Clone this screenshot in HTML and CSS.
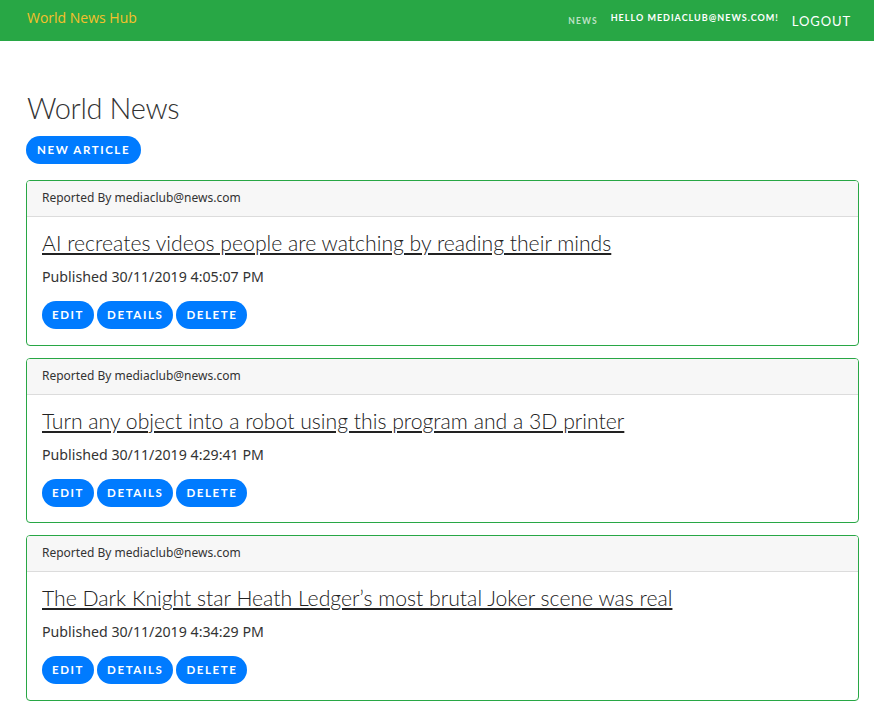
FILE: index.html
```html
<!DOCTYPE html>
<html lang="en">
<head>
<meta charset="utf-8">
<title>World News Hub</title>
<link rel="stylesheet" href="styles.css">
</head>
<body>
<nav class="navbar">
  <a class="brand" href="#">World News Hub</a>
  <div class="nav-right">
    <a class="nav-link" href="#">News</a>
    <span class="nav-hello">Hello mediaclub@news.com!</span>
    <a class="nav-logout" href="#">Logout</a>
  </div>
</nav>
<main class="container">
  <h1 class="page-title">World News</h1>
  <a class="btn btn-new" href="#">New Article</a>

  <div class="card">
    <div class="card-header">Reported By mediaclub@news.com</div>
    <div class="card-body">
      <a class="card-title" href="#">AI recreates videos people are watching by reading their minds</a>
      <p class="card-date">Published 30/11/2019 4:05:07 PM</p>
      <div class="actions">
        <a class="btn" href="#">Edit</a>
        <a class="btn" href="#">Details</a>
        <a class="btn" href="#">Delete</a>
      </div>
    </div>
  </div>

  <div class="card">
    <div class="card-header">Reported By mediaclub@news.com</div>
    <div class="card-body">
      <a class="card-title" href="#">Turn any object into a robot using this program and a 3D printer</a>
      <p class="card-date">Published 30/11/2019 4:29:41 PM</p>
      <div class="actions">
        <a class="btn" href="#">Edit</a>
        <a class="btn" href="#">Details</a>
        <a class="btn" href="#">Delete</a>
      </div>
    </div>
  </div>

  <div class="card">
    <div class="card-header">Reported By mediaclub@news.com</div>
    <div class="card-body">
      <a class="card-title" href="#">The Dark Knight star Heath Ledger’s most brutal Joker scene was real</a>
      <p class="card-date">Published 30/11/2019 4:34:29 PM</p>
      <div class="actions">
        <a class="btn" href="#">Edit</a>
        <a class="btn" href="#">Details</a>
        <a class="btn" href="#">Delete</a>
      </div>
    </div>
  </div>
</main>
</body>
</html>
```
FILE: styles.css
```css
* { box-sizing: border-box; }

body {
  margin: 0;
  font-family: "Noto Sans", "Open Sans", sans-serif;
  color: #333;
  background: #fff;
}

a { text-decoration: none; }

.navbar {
  display: flex;
  align-items: center;
  justify-content: space-between;
  height: 41px;
  padding: 0 23px 0 27px;
  background: #28a745;
}

.brand {
  font-family: "Open Sans", sans-serif;
  font-size: 14px;
  color: #f5c02b;
  margin-top: -6px;
}

.nav-right {
  display: flex;
  align-items: center;
}

.nav-link {
  font-family: "Lato", sans-serif;
  font-size: 8.5px;
  font-weight: 700;
  letter-spacing: 1.1px;
  text-transform: uppercase;
  color: rgba(255, 255, 255, 0.7);
  margin-right: 13px;
}

.nav-hello {
  font-family: "Lato", sans-serif;
  font-size: 9px;
  font-weight: 700;
  letter-spacing: 1px;
  text-transform: uppercase;
  color: #fff;
  margin-top: -6px;
  margin-right: 13px;
}

.nav-logout {
  font-family: "Lato", sans-serif;
  font-size: 13px;
  font-weight: 400;
  letter-spacing: 0.9px;
  text-transform: uppercase;
  color: #fff;
  margin-top: 1px;
}

.container {
  padding: 50px 15px 12px 26px;
}

.page-title {
  margin: 0 0 11px 1px;
  font-family: "Lato", sans-serif;
  font-weight: 300;
  font-size: 29px;
  line-height: 34px;
  letter-spacing: -0.35px;
  color: #333;
}

.btn {
  display: inline-block;
  height: 28px;
  line-height: 28px;
  padding: 0 10px;
  border-radius: 14px;
  background: #007bff;
  color: #fff;
  font-family: "Lato", sans-serif;
  font-weight: 700;
  font-size: 11.5px;
  letter-spacing: 1.6px;
  text-transform: uppercase;
}

.btn-new {
  padding: 0 11px;
  margin-bottom: 16px;
}

.card {
  border: 1px solid #28a745;
  border-radius: 4px;
  margin-bottom: 12px;
  overflow: hidden;
}

.card-header {
  height: 36px;
  line-height: 34px;
  padding: 0 15px;
  background: #f7f7f7;
  border-bottom: 1px solid #dcdcdc;
  font-size: 12px;
  color: #333;
}

.card-body {
  padding: 13px 15px 15.5px;
}

.card-title {
  display: inline-block;
  font-family: "Lato", sans-serif;
  font-weight: 300;
  font-size: 21.2px;
  line-height: 26px;
  color: #222;
  text-decoration: underline;
  text-decoration-thickness: 2px;
  text-underline-offset: 2px;
}

.card-date {
  margin: 11px 0 14px;
  font-size: 14.2px;
  line-height: 20px;
  color: #333;
}

.actions {
  display: flex;
  gap: 3px;
}
```
